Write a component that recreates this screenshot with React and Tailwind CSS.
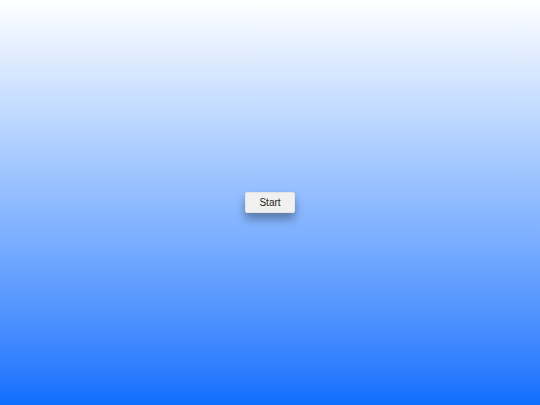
export default function App() {
  return (
    <div className="w-[540px] h-[405px] bg-gradient-to-b from-[#ffffff] to-[#0d6efd] flex items-center justify-center" style={{fontFamily: '"Liberation Sans", Arial, sans-serif'}}>
      <button className="w-[50px] h-[21px] bg-[#f0f0f0] rounded-[2px] text-[10px] text-[#222] shadow-[0_6px_10px_rgba(0,0,0,0.35)] border border-[#e4e4e4] flex items-center justify-center">
        Start
      </button>
    </div>
  );
}
